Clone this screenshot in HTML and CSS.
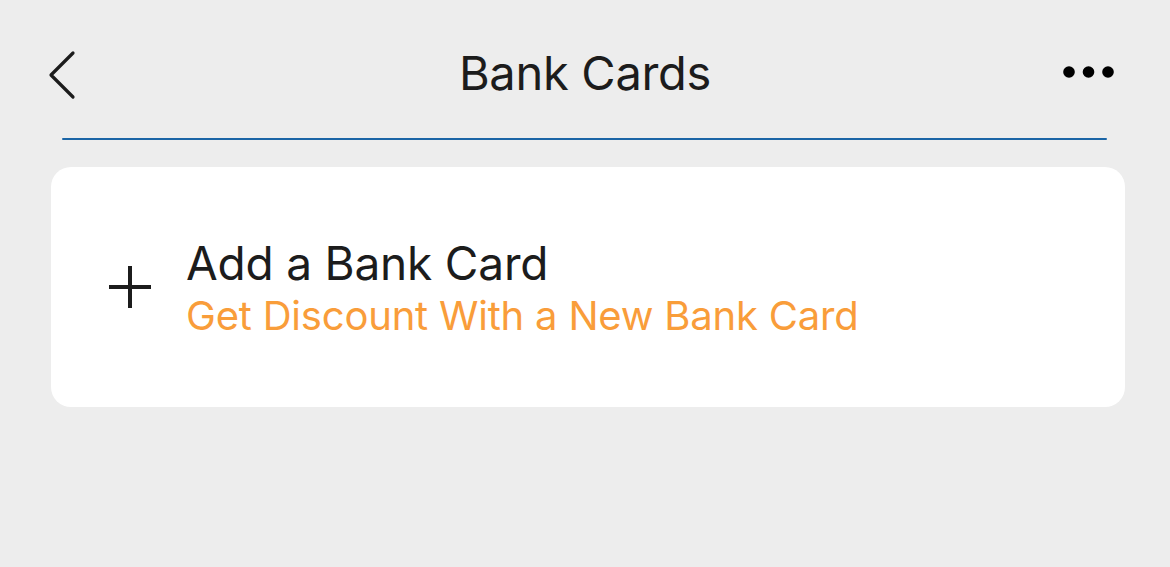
FILE: index.html
```html
<!DOCTYPE html>
<html lang="en">

<head>
  <meta charset="UTF-8">
  <meta name="viewport" content="width=device-width, initial-scale=1.0">
  <title>Bank Cards</title>
  <link rel="stylesheet" href="styles.css">
</head>

<body>
  <div class="topbar">
    <button class="back">
      <svg width="40" height="60" viewBox="0 0 40 60">
        <path d="M33 11 L11 33 L33 55" fill="none" stroke="#1c1c1c" stroke-width="3.2" stroke-linecap="round" stroke-linejoin="round" />
      </svg>
    </button>
    <div class="title">Bank Cards</div>
    <button class="more">
      <svg width="60" height="20" viewBox="0 0 60 20">
        <circle cx="10" cy="10" r="5.8" fill="#000" />
        <circle cx="29.5" cy="10" r="5.8" fill="#000" />
        <circle cx="49" cy="10" r="5.8" fill="#000" />
      </svg>
    </button>
  </div>
  <div class="divider"></div>

  <div class="card">
    <div class="plus">
      <svg width="44" height="44" viewBox="0 0 44 44">
        <path d="M22 1 V43 M1 22 H43" fill="none" stroke="#1c1c1c" stroke-width="4" />
      </svg>
    </div>
    <div class="card-text">
      <div class="card-title">Add a Bank Card</div>
      <div class="card-sub">Get Discount With a New Bank Card</div>
    </div>
  </div>
</body>

</html>
```

FILE: styles.css
```css
body {
  background: #ededed;
  margin: 0;
  padding: 0;
  font-family: Inter, "Noto Sans", sans-serif;
  color: #1c1c1c;
}

button {
  border: 0;
  background: none;
  padding: 0;
  margin: 0;
  cursor: pointer;
}

.topbar {
  height: 132px;
  padding-top: 6px;
  display: grid;
  grid-template-columns: 1fr auto 1fr;
  align-items: center;
}

.back {
  width: 40px;
  height: 60px;
  margin-left: 40px;
  justify-self: start;
}

.back svg,
.more svg,
.plus svg {
  display: block;
}

.title {
  font-size: 47px;
  font-weight: 400;
  letter-spacing: -0.3px;
}

.more {
  width: 60px;
  height: 20px;
  margin-right: 51px;
  justify-self: end;
}

.divider {
  height: 2px;
  margin: 0 63px 0 62px;
  background: #1b65a6;
  border-radius: 1px;
}

.card {
  margin: 27px 45px 0 51px;
  height: 240px;
  background: #fff;
  border-radius: 20px;
  display: flex;
  align-items: center;
}

.plus {
  margin-left: 57px;
  margin-right: 34px;
}

.card-text {
  display: flex;
  flex-direction: column;
}

.card-title {
  font-size: 46px;
  line-height: 56px;
  letter-spacing: -0.2px;
}

.card-sub {
  font-size: 40px;
  line-height: 46px;
  letter-spacing: -0.2px;
  margin-top: 2px;
  color: #f99d3a;
}
```
